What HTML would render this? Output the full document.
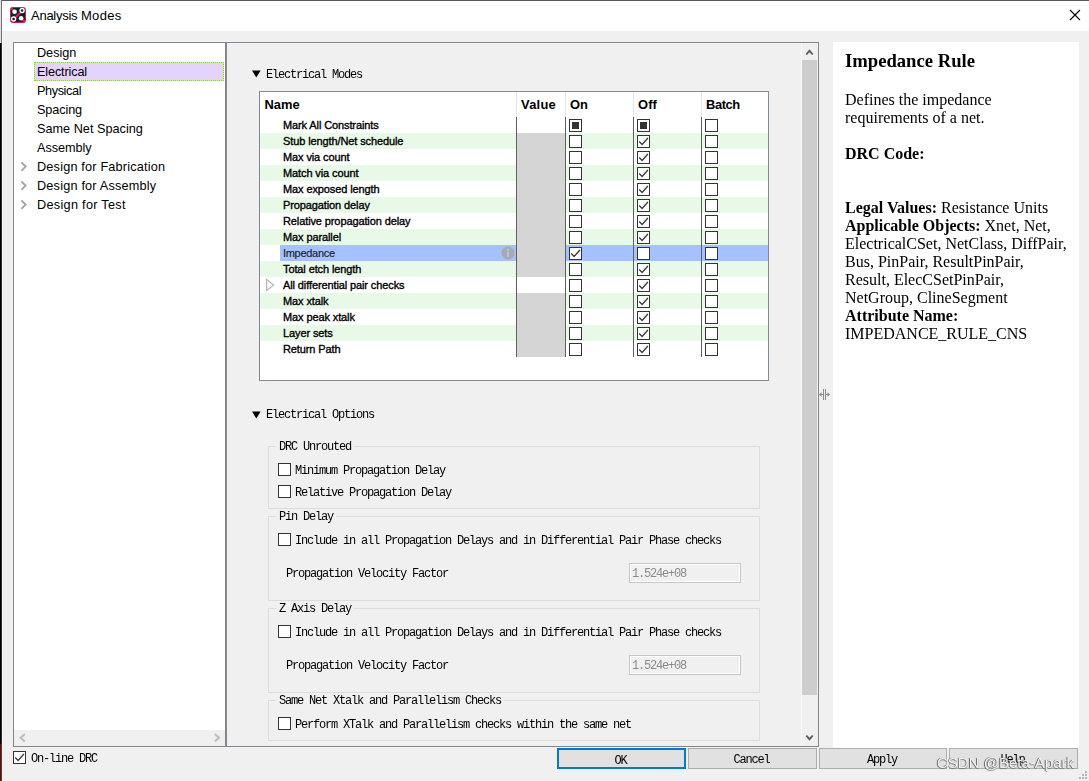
<!DOCTYPE html>
<html><head><meta charset="utf-8"><title>Analysis Modes</title>
<style>
html,body{margin:0;padding:0}
body{width:1089px;height:781px;position:relative;overflow:hidden;background:#f0f0f0;font-family:"Liberation Sans",sans-serif;color:#000}
div,span,i{position:absolute;box-sizing:border-box}
.ui{font-family:"Liberation Sans",sans-serif;font-size:12.7px;line-height:19px;white-space:nowrap;color:#000}
.mono{font-family:"Liberation Mono",monospace;font-size:12px;letter-spacing:-1.2px;line-height:14px;white-space:nowrap;color:#000;margin-top:1px;will-change:transform}
.cb{width:13px;height:13px;border:1px solid #333;background:#fff}
.cb svg{position:absolute;left:-1px;top:-1px}
.sq{left:2px;top:2px;width:7px;height:7px;background:#333}
.row{left:260px;width:508px;height:16px}
.g{background:#e9f9e8}
.nm{font-family:"Liberation Sans",sans-serif;font-size:11px;letter-spacing:-0.11px;line-height:16px;white-space:nowrap;color:#000;left:283px;-webkit-text-stroke:0.35px #000}
.hd{font-family:"Liberation Sans",sans-serif;font-weight:bold;font-size:12.9px;line-height:16px;top:97px;white-space:nowrap}
.grp{border:1px solid #dcdcdc}
.lbl{background:#f0f0f0;padding:0 3px}
  .btn{top:748px;height:21px;background:#e1e1e1;border:1px solid #adadad;text-align:center}
.btn span{position:relative;left:-1px}
.doc{font-family:"Liberation Serif",serif;font-size:16px;line-height:18px;color:#000;white-space:nowrap;left:845px;will-change:transform}
.doc b{font-weight:bold}
</style></head><body>

<div style="left:0;top:0;width:1089px;height:31px;background:#fff"></div>
<div style="left:1px;top:0;width:1088px;height:1px;background:#5a5a5a"></div>
<div style="left:0;top:0;width:1px;height:43px;background:#e0e0e0"></div>
<div style="left:1px;top:0;width:1px;height:43px;background:#707070"></div>
<div style="left:2px;top:31px;width:1px;height:750px;background:#f8f8f8"></div>
<div style="left:0;top:43px;width:1px;height:701px;background:#000"></div><div style="left:1px;top:43px;width:1px;height:701px;background:#333"></div>
<div style="left:0;top:744px;width:1px;height:37px;background:#5a0a0a"></div><div style="left:1px;top:744px;width:1px;height:37px;background:#7a3434"></div>
<svg style="position:absolute;left:10px;top:7px" width="16" height="16" viewBox="0 0 16 16">
<rect x="0.5" y="0.5" width="15" height="15" rx="2.2" fill="#0c2433" stroke="#d81e3c" stroke-width="1"/>
<path d="M1 1 L4.5 4.5 M4 12 L12 4 M11.5 11.5 L15 15" stroke="#e8203e" stroke-width="1.9" fill="none"/>
<circle cx="4.6" cy="4.8" r="2.3" fill="#fff"/>
<circle cx="11.1" cy="11.3" r="2.3" fill="#fff"/>
<circle cx="12.1" cy="3.5" r="2" fill="#0c2433" stroke="#fff" stroke-width="1.4"/>
<circle cx="3.6" cy="12" r="2" fill="#0c2433" stroke="#fff" stroke-width="1.4"/>
</svg>
<div class="ui" style="left:31px;top:6px;font-size:13px"><em style="font-style:normal;letter-spacing:-0.26px">Analysis</em> <em style="font-style:normal;letter-spacing:0.34px">Modes</em></div>
<svg style="position:absolute;left:1069px;top:9px" width="12" height="12" viewBox="0 0 12 12"><path d="M1 1 L11 11 M11 1 L1 11" stroke="#000" stroke-width="1.1" fill="none"/></svg>
<div style="left:13px;top:42px;width:213px;height:705px;background:#fff;border:1px solid #828790"></div>
<div style="left:226px;top:42px;width:593px;height:705px;border:1px solid #828790;border-right-color:#828790"></div>
<div style="left:14px;top:730px;width:211px;height:16px;background:#f0f0f0"></div>
<svg style="position:absolute;left:18px;top:732px" width="10" height="12" viewBox="0 0 10 12"><path d="M6.8 1.9 L2.6 5.7 L6.8 9.5" fill="none" stroke="#bdbdbd" stroke-width="2"/></svg>
<svg style="position:absolute;left:212px;top:732px" width="10" height="12" viewBox="0 0 10 12"><path d="M2.8 1.9 L7 5.7 L2.8 9.5" fill="none" stroke="#bdbdbd" stroke-width="2"/></svg>
<div style="left:34px;top:62px;width:190px;height:19px;background:#e6d2ff;border:1px dotted #7be000"></div>
<div class="ui" style="left:37px;top:44px;letter-spacing:-0.039px">Design</div>
<div class="ui" style="left:37px;top:63px;letter-spacing:-0.142px">Electrical</div>
<div class="ui" style="left:37px;top:82px;letter-spacing:-0.399px">Physical</div>
<div class="ui" style="left:37px;top:101px;letter-spacing:-0.114px">Spacing</div>
<div class="ui" style="left:37px;top:120px;letter-spacing:0.007px">Same Net Spacing</div>
<div class="ui" style="left:37px;top:139px;letter-spacing:-0.069px">Assembly</div>
<div class="ui" style="left:37px;top:158px;letter-spacing:0.189px">Design for Fabrication</div>
<svg style="position:absolute;left:19px;top:161px" width="10" height="12" viewBox="0 0 10 12"><path d="M2.4 1.4 L6.6 5.6 L2.4 9.8" fill="none" stroke="#a3a3a3" stroke-width="1.8"/></svg>
<div class="ui" style="left:37px;top:177px;letter-spacing:0.197px">Design for Assembly</div>
<svg style="position:absolute;left:19px;top:180px" width="10" height="12" viewBox="0 0 10 12"><path d="M2.4 1.4 L6.6 5.6 L2.4 9.8" fill="none" stroke="#a3a3a3" stroke-width="1.8"/></svg>
<div class="ui" style="left:37px;top:196px;letter-spacing:0.295px">Design for Test</div>
<svg style="position:absolute;left:19px;top:199px" width="10" height="12" viewBox="0 0 10 12"><path d="M2.4 1.4 L6.6 5.6 L2.4 9.8" fill="none" stroke="#a3a3a3" stroke-width="1.8"/></svg>
<svg style="position:absolute;left:252px;top:70px" width="9" height="8" viewBox="0 0 9 8"><path d="M0 0.5 L8.6 0.5 L4.3 7.6 Z" fill="#000"/></svg>
<div class="mono" style="left:266px;top:67px">Electrical Modes</div>
<div style="left:259px;top:91px;width:510px;height:290px;background:#fff;border:1px solid #828790"></div>
<div class="hd" style="left:264.5px">Name</div>
<div class="hd" style="left:521px;letter-spacing:0.25px">Value</div>
<div class="hd" style="left:570px">On</div>
<div class="hd" style="left:638px;letter-spacing:0.15px">Off</div>
<div class="hd" style="left:706px;letter-spacing:-0.4px">Batch</div>
<div style="left:516px;top:92px;width:1px;height:25px;background:#e5e5e5"></div>
<div style="left:565px;top:92px;width:1px;height:25px;background:#e5e5e5"></div>
<div style="left:633px;top:92px;width:1px;height:25px;background:#e5e5e5"></div>
<div style="left:701px;top:92px;width:1px;height:25px;background:#e5e5e5"></div>
<div class="nm" style="top:117px">Mark All Constraints</div>
<div class="cb" style="left:569px;top:119px"><i class="sq"></i></div>
<div class="cb" style="left:637px;top:119px"><i class="sq"></i></div>
<div class="cb" style="left:705px;top:119px"></div>
<div class="row g" style="top:133px"></div>
<div style="left:517px;top:133px;width:48px;height:16px;background:#d5d5d5"></div>
<div class="nm" style="top:133px">Stub length/Net schedule</div>
<div class="cb" style="left:569px;top:135px"></div>
<div class="cb" style="left:637px;top:135px"><svg width="13" height="13" viewBox="0 0 13 13"><path d="M2.2 6.5 L5.1 9.5 L10.9 3" fill="none" stroke="#3c3c3c" stroke-width="1.35"/></svg></div>
<div class="cb" style="left:705px;top:135px"></div>
<div style="left:517px;top:149px;width:48px;height:16px;background:#d5d5d5"></div>
<div class="nm" style="top:149px">Max via count</div>
<div class="cb" style="left:569px;top:151px"></div>
<div class="cb" style="left:637px;top:151px"><svg width="13" height="13" viewBox="0 0 13 13"><path d="M2.2 6.5 L5.1 9.5 L10.9 3" fill="none" stroke="#3c3c3c" stroke-width="1.35"/></svg></div>
<div class="cb" style="left:705px;top:151px"></div>
<div class="row g" style="top:165px"></div>
<div style="left:517px;top:165px;width:48px;height:16px;background:#d5d5d5"></div>
<div class="nm" style="top:165px">Match via count</div>
<div class="cb" style="left:569px;top:167px"></div>
<div class="cb" style="left:637px;top:167px"><svg width="13" height="13" viewBox="0 0 13 13"><path d="M2.2 6.5 L5.1 9.5 L10.9 3" fill="none" stroke="#3c3c3c" stroke-width="1.35"/></svg></div>
<div class="cb" style="left:705px;top:167px"></div>
<div style="left:517px;top:181px;width:48px;height:16px;background:#d5d5d5"></div>
<div class="nm" style="top:181px">Max exposed length</div>
<div class="cb" style="left:569px;top:183px"></div>
<div class="cb" style="left:637px;top:183px"><svg width="13" height="13" viewBox="0 0 13 13"><path d="M2.2 6.5 L5.1 9.5 L10.9 3" fill="none" stroke="#3c3c3c" stroke-width="1.35"/></svg></div>
<div class="cb" style="left:705px;top:183px"></div>
<div class="row g" style="top:197px"></div>
<div style="left:517px;top:197px;width:48px;height:16px;background:#d5d5d5"></div>
<div class="nm" style="top:197px">Propagation delay</div>
<div class="cb" style="left:569px;top:199px"></div>
<div class="cb" style="left:637px;top:199px"><svg width="13" height="13" viewBox="0 0 13 13"><path d="M2.2 6.5 L5.1 9.5 L10.9 3" fill="none" stroke="#3c3c3c" stroke-width="1.35"/></svg></div>
<div class="cb" style="left:705px;top:199px"></div>
<div style="left:517px;top:213px;width:48px;height:16px;background:#d5d5d5"></div>
<div class="nm" style="top:213px">Relative propagation delay</div>
<div class="cb" style="left:569px;top:215px"></div>
<div class="cb" style="left:637px;top:215px"><svg width="13" height="13" viewBox="0 0 13 13"><path d="M2.2 6.5 L5.1 9.5 L10.9 3" fill="none" stroke="#3c3c3c" stroke-width="1.35"/></svg></div>
<div class="cb" style="left:705px;top:215px"></div>
<div class="row g" style="top:229px"></div>
<div style="left:517px;top:229px;width:48px;height:16px;background:#d5d5d5"></div>
<div class="nm" style="top:229px">Max parallel</div>
<div class="cb" style="left:569px;top:231px"></div>
<div class="cb" style="left:637px;top:231px"><svg width="13" height="13" viewBox="0 0 13 13"><path d="M2.2 6.5 L5.1 9.5 L10.9 3" fill="none" stroke="#3c3c3c" stroke-width="1.35"/></svg></div>
<div class="cb" style="left:705px;top:231px"></div>
<div style="left:280px;top:245px;width:488px;height:16px;background:#a6c1ff"></div>
<div style="left:517px;top:245px;width:48px;height:16px;background:#d5d5d5"></div>
<div class="nm" style="top:245px;-webkit-text-stroke:0.15px #1c1c1c;color:#1c1c1c;letter-spacing:-0.3px">Impedance</div>
<div class="cb" style="left:569px;top:247px"><svg width="13" height="13" viewBox="0 0 13 13"><path d="M2.2 6.5 L5.1 9.5 L10.9 3" fill="none" stroke="#3c3c3c" stroke-width="1.35"/></svg></div>
<div class="cb" style="left:637px;top:247px"></div>
<div class="cb" style="left:705px;top:247px"></div>
<div class="row g" style="top:261px"></div>
<div style="left:517px;top:261px;width:48px;height:16px;background:#d5d5d5"></div>
<div class="nm" style="top:261px">Total etch length</div>
<div class="cb" style="left:569px;top:263px"></div>
<div class="cb" style="left:637px;top:263px"><svg width="13" height="13" viewBox="0 0 13 13"><path d="M2.2 6.5 L5.1 9.5 L10.9 3" fill="none" stroke="#3c3c3c" stroke-width="1.35"/></svg></div>
<div class="cb" style="left:705px;top:263px"></div>
<div style="left:517px;top:277px;width:48px;height:16px;background:#fff"></div>
<div class="nm" style="top:277px">All differential pair checks</div>
<div class="cb" style="left:569px;top:279px"></div>
<div class="cb" style="left:637px;top:279px"><svg width="13" height="13" viewBox="0 0 13 13"><path d="M2.2 6.5 L5.1 9.5 L10.9 3" fill="none" stroke="#3c3c3c" stroke-width="1.35"/></svg></div>
<div class="cb" style="left:705px;top:279px"></div>
<div class="row g" style="top:293px"></div>
<div style="left:517px;top:293px;width:48px;height:16px;background:#d5d5d5"></div>
<div class="nm" style="top:293px">Max xtalk</div>
<div class="cb" style="left:569px;top:295px"></div>
<div class="cb" style="left:637px;top:295px"><svg width="13" height="13" viewBox="0 0 13 13"><path d="M2.2 6.5 L5.1 9.5 L10.9 3" fill="none" stroke="#3c3c3c" stroke-width="1.35"/></svg></div>
<div class="cb" style="left:705px;top:295px"></div>
<div style="left:517px;top:309px;width:48px;height:16px;background:#d5d5d5"></div>
<div class="nm" style="top:309px">Max peak xtalk</div>
<div class="cb" style="left:569px;top:311px"></div>
<div class="cb" style="left:637px;top:311px"><svg width="13" height="13" viewBox="0 0 13 13"><path d="M2.2 6.5 L5.1 9.5 L10.9 3" fill="none" stroke="#3c3c3c" stroke-width="1.35"/></svg></div>
<div class="cb" style="left:705px;top:311px"></div>
<div class="row g" style="top:325px"></div>
<div style="left:517px;top:325px;width:48px;height:16px;background:#d5d5d5"></div>
<div class="nm" style="top:325px">Layer sets</div>
<div class="cb" style="left:569px;top:327px"></div>
<div class="cb" style="left:637px;top:327px"><svg width="13" height="13" viewBox="0 0 13 13"><path d="M2.2 6.5 L5.1 9.5 L10.9 3" fill="none" stroke="#3c3c3c" stroke-width="1.35"/></svg></div>
<div class="cb" style="left:705px;top:327px"></div>
<div style="left:517px;top:341px;width:48px;height:16px;background:#d5d5d5"></div>
<div class="nm" style="top:341px">Return Path</div>
<div class="cb" style="left:569px;top:343px"></div>
<div class="cb" style="left:637px;top:343px"><svg width="13" height="13" viewBox="0 0 13 13"><path d="M2.2 6.5 L5.1 9.5 L10.9 3" fill="none" stroke="#3c3c3c" stroke-width="1.35"/></svg></div>
<div class="cb" style="left:705px;top:343px"></div>
<div style="left:516px;top:117px;width:1px;height:240px;background:#5f5f5f"></div>
<div style="left:565px;top:117px;width:1px;height:240px;background:#5f5f5f"></div>
<div style="left:633px;top:117px;width:1px;height:240px;background:#5f5f5f"></div>
<div style="left:701px;top:117px;width:1px;height:240px;background:#5f5f5f"></div>
<svg style="position:absolute;left:265px;top:278px" width="11" height="14" viewBox="0 0 11 14"><path d="M1.6 1.4 L8.6 7 L1.6 12.6 Z" fill="#fff" stroke="#b4b4b4" stroke-width="1.2"/></svg>
<svg style="position:absolute;left:501px;top:246px" width="14" height="14" viewBox="0 0 14 14"><circle cx="7" cy="7" r="6.5" fill="#abaaaa"/><rect x="5.9" y="5.6" width="2.2" height="5.4" fill="#a6c1ff"/><rect x="5.9" y="2.7" width="2.2" height="2" fill="#a6c1ff"/></svg>
<svg style="position:absolute;left:252px;top:411px" width="9" height="8" viewBox="0 0 9 8"><path d="M0 0.5 L8.6 0.5 L4.3 7.6 Z" fill="#000"/></svg>
<div class="mono" style="left:266px;top:407px">Electrical Options</div>
<div class="grp" style="left:268px;top:446px;width:492px;height:63px"></div>
<div class="mono lbl" style="left:276px;top:439px">DRC Unrouted</div>
<div class="cb" style="left:278px;top:463px"></div>
<div class="mono" style="left:295px;top:463px">Minimum Propagation Delay</div>
<div class="cb" style="left:278px;top:485px"></div>
<div class="mono" style="left:295px;top:485px">Relative Propagation Delay</div>
<div class="grp" style="left:268px;top:516px;width:492px;height:85px"></div>
<div class="mono lbl" style="left:276px;top:509px">Pin Delay</div>
<div class="cb" style="left:278px;top:533px"></div>
<div class="mono" style="left:295px;top:533px">Include in all Propagation Delays and in Differential Pair Phase checks</div>
<div class="mono" style="left:286px;top:566px">Propagation Velocity Factor</div>
<div style="left:629px;top:563px;width:112px;height:20px;border:1px solid #c6c6c6;background:#f0f0f0"><div style="left:0;top:0;width:110px;height:18px;border:1px solid #fff"></div><div class="mono" style="left:2px;top:2px;color:#8a8a8a">1.524e+08</div></div>
<div class="grp" style="left:268px;top:608px;width:492px;height:85px"></div>
<div class="mono lbl" style="left:276px;top:601px">Z Axis Delay</div>
<div class="cb" style="left:278px;top:625px"></div>
<div class="mono" style="left:295px;top:625px">Include in all Propagation Delays and in Differential Pair Phase checks</div>
<div class="mono" style="left:286px;top:658px">Propagation Velocity Factor</div>
<div style="left:629px;top:655px;width:112px;height:20px;border:1px solid #c6c6c6;background:#f0f0f0"><div style="left:0;top:0;width:110px;height:18px;border:1px solid #fff"></div><div class="mono" style="left:2px;top:2px;color:#8a8a8a">1.524e+08</div></div>
<div class="grp" style="left:268px;top:700px;width:492px;height:41px"></div>
<div class="mono lbl" style="left:276px;top:693px">Same Net Xtalk and Parallelism Checks</div>
<div class="cb" style="left:278px;top:717px"></div>
<div class="mono" style="left:295px;top:717px">Perform XTalk and Parallelism checks within the same net</div>
<div style="left:801px;top:43px;width:1px;height:703px;background:#f8f8f8"></div>
<div style="left:802px;top:60px;width:15px;height:635px;background:#cdcdcd"></div>
<svg style="position:absolute;left:805px;top:48px" width="9" height="8" viewBox="0 0 9 8"><path d="M1.3 6.5 L4.5 2.8 L7.7 6.5" fill="none" stroke="#5c5c5c" stroke-width="1.9"/></svg>
<svg style="position:absolute;left:805px;top:734px" width="9" height="8" viewBox="0 0 9 8"><path d="M1.3 1.5 L4.5 5.2 L7.7 1.5" fill="none" stroke="#5c5c5c" stroke-width="1.9"/></svg>
<svg style="position:absolute;left:819px;top:388px" width="12" height="13" viewBox="0 0 12 13"><path d="M4.5 1 V12 M6.5 1 V12 M0.5 6.5 H4 M7 6.5 H10.5" stroke="#8a8a8a" stroke-width="1" fill="none"/><path d="M0 6.5 L2.5 4.3 V8.7 Z M11 6.5 L8.5 4.3 V8.7 Z" fill="#8a8a8a"/></svg>
<div style="left:833px;top:42px;width:246px;height:706px;background:#fff"></div>
<div class="doc" style="top:50px;font-size:18.65px;line-height:22px;font-weight:bold">Impedance Rule</div>
<div class="doc" style="top:91px">Defines the impedance</div>
<div class="doc" style="top:109px">requirements of a net.</div>
<div class="doc" style="top:145px"><b>DRC Code:</b></div>
<div class="doc" style="top:199px"><b>Legal Values:</b> Resistance Units</div>
<div class="doc" style="top:217px"><b>Applicable Objects:</b> Xnet, Net,</div>
<div class="doc" style="top:235px">ElectricalCSet, NetClass, DiffPair,</div>
<div class="doc" style="top:253px">Bus, PinPair, ResultPinPair,</div>
<div class="doc" style="top:271px">Result, ElecCSetPinPair,</div>
<div class="doc" style="top:289px">NetGroup, ClineSegment</div>
<div class="doc" style="top:307px"><b>Attribute Name:</b></div>
<div class="doc" style="top:325px">IMPEDANCE_RULE_CNS</div>
<div class="cb" style="left:13px;top:751px"><svg width="13" height="13" viewBox="0 0 13 13"><path d="M2.2 6.5 L5.1 9.5 L10.9 3" fill="none" stroke="#3c3c3c" stroke-width="1.35"/></svg></div>
<div class="mono" style="left:31px;top:751px">On-line DRC</div>
<div class="btn" style="left:557px;width:129px;border:2px solid #0078d7"><span class="mono" style="line-height:18px">OK</span></div>
<div class="btn" style="left:688px;width:129px"><span class="mono" style="line-height:20px">Cancel</span></div>
<div class="btn" style="left:819px;width:128px"><span class="mono" style="line-height:20px">Apply</span></div>
<div class="btn" style="left:949px;width:129px"><span class="mono" style="line-height:20px">Help</span></div>
<div style="left:937px;top:754px;font-family:'Liberation Sans',sans-serif;font-size:15px;line-height:18px;white-space:nowrap;will-change:transform;color:rgba(252,252,252,.92);text-shadow:-0.9px 0 0.7px rgba(70,70,70,.85),0 0.8px 0.7px rgba(90,90,90,.6)">CSDN @Beta-Apark</div>
<svg style="position:absolute;left:1077px;top:771px" width="10" height="9" viewBox="0 0 10 9"><rect x="8" y="0" width="2" height="2" fill="#b8b8b8"/><rect x="5" y="3" width="2" height="2" fill="#b8b8b8"/><rect x="8" y="3" width="2" height="2" fill="#b8b8b8"/><rect x="2" y="6" width="2" height="2" fill="#b8b8b8"/><rect x="5" y="6" width="2" height="2" fill="#b8b8b8"/><rect x="8" y="6" width="2" height="2" fill="#b8b8b8"/></svg>
</body></html>
